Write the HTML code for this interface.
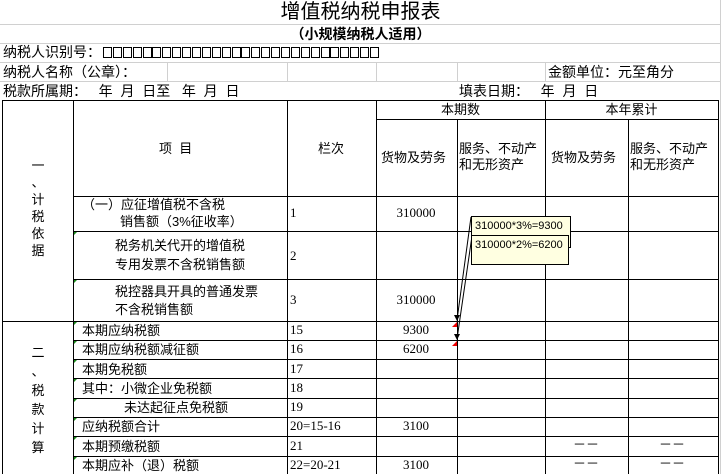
<!DOCTYPE html>
<html><head><meta charset="utf-8"><style>
body{margin:0;width:721px;height:474px;overflow:hidden;background:#fff;position:relative;font-family:"Liberation Sans","Noto Sans CJK SC",sans-serif;font-size:13px;color:#000}
.h,.v{position:absolute;background:#000}
.g{position:absolute;background:#d0d0d0}
.t{position:absolute;white-space:nowrap;line-height:16px}
.n{font-family:"Liberation Serif","Noto Serif CJK SC",serif;font-size:13px}
.c{position:absolute;background:#ffffe1;border:1px solid #000;font-size:11px;line-height:14px;padding:2px 3px;box-sizing:border-box}
.tri{position:absolute;width:0;height:0}
.gm{position:absolute;width:0;height:0;border-top:3px solid #1a8a1a;border-right:3px solid transparent}
.b{display:inline-block;width:7px;height:9px;border:1.5px solid #000;margin-right:0.9px;color:transparent;font-size:7px;line-height:9px;overflow:hidden;vertical-align:-1px}
</style></head><body>
<div class="g" style="left:0;top:24px;width:721px;height:1px"></div>
<div class="g" style="left:0;top:43px;width:721px;height:1px"></div>
<div class="g" style="left:0;top:62px;width:721px;height:1px"></div>
<div class="g" style="left:0;top:81px;width:721px;height:1px"></div>
<div class="g" style="left:167px;top:62px;width:1px;height:19px"></div>
<div class="g" style="left:287px;top:62px;width:1px;height:19px"></div>
<div class="g" style="left:376px;top:62px;width:1px;height:19px"></div>
<div class="g" style="left:457px;top:62px;width:1px;height:19px"></div>
<div class="g" style="left:545px;top:62px;width:1px;height:19px"></div>
<div class="g" style="left:720px;top:0;width:1px;height:474px"></div>

<div class="t" style="left:0;width:721px;text-align:center;top:1px;font-size:20px;line-height:22px">增值税纳税申报表</div>
<div class="t" style="left:0;width:721px;text-align:center;top:26px;font-weight:bold;font-size:14px">（小规模纳税人适用）</div>
<div class="t" style="left:3px;top:44px;font-size:14px">纳税人识别号：</div>
<div class="t" style="left:103px;top:44px;font-size:14px"><span class="b">□</span><span class="b">□</span><span class="b">□</span><span class="b">□</span><span class="b">□</span><span class="b">□</span><span class="b">□</span><span class="b">□</span><span class="b">□</span><span class="b">□</span><span class="b">□</span><span class="b">□</span><span class="b">□</span><span class="b">□</span><span class="b">□</span><span class="b">□</span><span class="b">□</span><span class="b">□</span><span class="b">□</span><span class="b">□</span><span class="b">□</span><span class="b">□</span><span class="b">□</span><span class="b">□</span><span class="b">□</span><span class="b">□</span><span class="b">□</span><span class="b">□</span></div>
<div class="t" style="left:3px;top:64px;font-size:14px">纳税人名称（公章）：</div>
<div class="t" style="left:548px;top:64px;font-size:14px">金额单位：元至角分</div>
<div class="t" style="left:3px;top:83px;font-size:14px">税款所属期：&nbsp;&nbsp;&nbsp;年&nbsp;&nbsp;月&nbsp;&nbsp;日至&nbsp;&nbsp;&nbsp;年&nbsp;&nbsp;月&nbsp;&nbsp;日</div>
<div class="t" style="left:459px;top:83px;font-size:14px">填表日期：&nbsp;&nbsp;&nbsp;年&nbsp;&nbsp;月&nbsp;&nbsp;日</div>

<div class="h" style="left:2px;top:100px;width:717px;height:1px"></div>
<div class="h" style="left:376px;top:119px;width:343px;height:1px"></div>
<div class="h" style="left:73px;top:196px;width:646px;height:1px"></div>
<div class="h" style="left:73px;top:231px;width:646px;height:1px"></div>
<div class="h" style="left:73px;top:279px;width:646px;height:1px"></div>
<div class="h" style="left:2px;top:321px;width:717px;height:1px"></div>
<div class="h" style="left:73px;top:340px;width:646px;height:1px"></div>
<div class="h" style="left:73px;top:359px;width:646px;height:1px"></div>
<div class="h" style="left:73px;top:378px;width:646px;height:1px"></div>
<div class="h" style="left:73px;top:398px;width:646px;height:1px"></div>
<div class="h" style="left:73px;top:417px;width:646px;height:1px"></div>
<div class="h" style="left:73px;top:436px;width:646px;height:1px"></div>
<div class="h" style="left:73px;top:456px;width:646px;height:1px"></div>
<div class="v" style="left:2px;top:100px;width:1px;height:374px"></div>
<div class="v" style="left:73px;top:100px;width:1px;height:374px"></div>
<div class="v" style="left:287px;top:100px;width:1px;height:374px"></div>
<div class="v" style="left:376px;top:100px;width:1px;height:374px"></div>
<div class="v" style="left:457px;top:119px;width:1px;height:355px"></div>
<div class="v" style="left:545px;top:100px;width:1px;height:374px"></div>
<div class="v" style="left:628px;top:119px;width:1px;height:355px"></div>
<div class="v" style="left:718px;top:100px;width:1px;height:374px"></div>

<div class="t" style="left:376px;width:169px;text-align:center;top:102px">本期数</div>
<div class="t" style="left:545px;width:173px;text-align:center;top:102px">本年累计</div>
<div class="t" style="left:159px;top:141px">项&nbsp;&nbsp;目</div>
<div class="t" style="left:318px;top:141px">栏次</div>
<div class="t" style="left:381px;top:150px">货物及劳务</div>
<div class="t" style="left:459px;top:141px">服务、不动产<br>和无形资产</div>
<div class="t" style="left:551px;top:150px">货物及劳务</div>
<div class="t" style="left:630px;top:141px">服务、不动产<br>和无形资产</div>

<div class="t" style="left:31px;top:157px;line-height:17px;text-align:center;width:14px">一<br>、<br>计<br>税<br>依<br>据</div>
<div class="t" style="left:31px;top:343px;line-height:19px;text-align:center;width:14px">二<br>、<br>税<br>款<br>计<br>算</div>

<div class="t" style="left:82px;top:197px">（一）应征增值税不含税</div>
<div class="t" style="left:120px;top:214px">销售额（3%征收率）</div>
<div class="t n" style="left:290px;top:205px">1</div>
<div class="t n" style="left:376px;width:80px;text-align:center;top:205px">310000</div>

<div class="t" style="left:115px;top:238px">税务机关代开的增值税</div>
<div class="t" style="left:115px;top:257px">专用发票不含税销售额</div>
<div class="t n" style="left:290px;top:248px">2</div>

<div class="t" style="left:115px;top:284px">税控器具开具的普通发票</div>
<div class="t" style="left:115px;top:302px">不含税销售额</div>
<div class="t n" style="left:290px;top:292px">3</div>
<div class="t n" style="left:376px;width:80px;text-align:center;top:292px">310000</div>

<div class="t" style="left:82px;top:323px">本期应纳税额</div><div class="t n" style="left:290px;top:322px">15</div><div class="t n" style="left:376px;width:80px;text-align:center;top:322px">9300</div>
<div class="t" style="left:82px;top:342px">本期应纳税额减征额</div><div class="t n" style="left:290px;top:341px">16</div><div class="t n" style="left:376px;width:80px;text-align:center;top:341px">6200</div>
<div class="t" style="left:82px;top:362px">本期免税额</div><div class="t n" style="left:290px;top:361px">17</div>
<div class="t" style="left:82px;top:381px">其中：小微企业免税额</div><div class="t n" style="left:290px;top:380px">18</div>
<div class="t" style="left:124px;top:400px">未达起征点免税额</div><div class="t n" style="left:290px;top:399px">19</div>
<div class="t" style="left:82px;top:419px">应纳税额合计</div><div class="t n" style="left:290px;top:418px">20=15-16</div><div class="t n" style="left:376px;width:80px;text-align:center;top:418px">3100</div>
<div class="t" style="left:82px;top:439px">本期预缴税额</div><div class="t n" style="left:290px;top:438px">21</div>
<div class="t" style="left:82px;top:458px">本期应补（退）税额</div><div class="t n" style="left:290px;top:457px">22=20-21</div><div class="t n" style="left:376px;width:80px;text-align:center;top:457px">3100</div>
<div class="t" style="left:573px;top:437px">－－</div><div class="t" style="left:659px;top:437px">－－</div>
<div class="t" style="left:573px;top:456px">－－</div><div class="t" style="left:659px;top:456px">－－</div>

<div class="gm" style="left:74px;top:232px"></div><div class="gm" style="left:74px;top:280px"></div>
<div class="gm" style="left:74px;top:322px"></div><div class="gm" style="left:74px;top:341px"></div>
<div class="gm" style="left:74px;top:360px"></div><div class="gm" style="left:74px;top:379px"></div>
<div class="gm" style="left:74px;top:399px"></div><div class="gm" style="left:74px;top:418px"></div>
<div class="gm" style="left:74px;top:437px"></div><div class="gm" style="left:74px;top:457px"></div>

<div class="tri" style="left:452px;top:322px;border-top:5px solid transparent;border-right:5px solid #e00"></div>
<div class="tri" style="left:452px;top:341px;border-top:5px solid transparent;border-right:5px solid #e00"></div>

<svg style="position:absolute;left:0;top:0" width="721" height="474">
<line x1="471" y1="217" x2="457" y2="320" stroke="#000" stroke-width="1"/>
<line x1="472" y1="236" x2="457" y2="339" stroke="#000" stroke-width="1"/>
<polygon points="454,315 460,315 457,321" fill="#000"/>
<polygon points="454,334 460,334 457,340" fill="#000"/>
</svg>
<div class="c" style="left:471px;top:216px;width:100px;height:32px">310000*3%=9300</div>
<div class="c" style="left:471px;top:235px;width:98px;height:30px">310000*2%=6200</div>
</body></html>
